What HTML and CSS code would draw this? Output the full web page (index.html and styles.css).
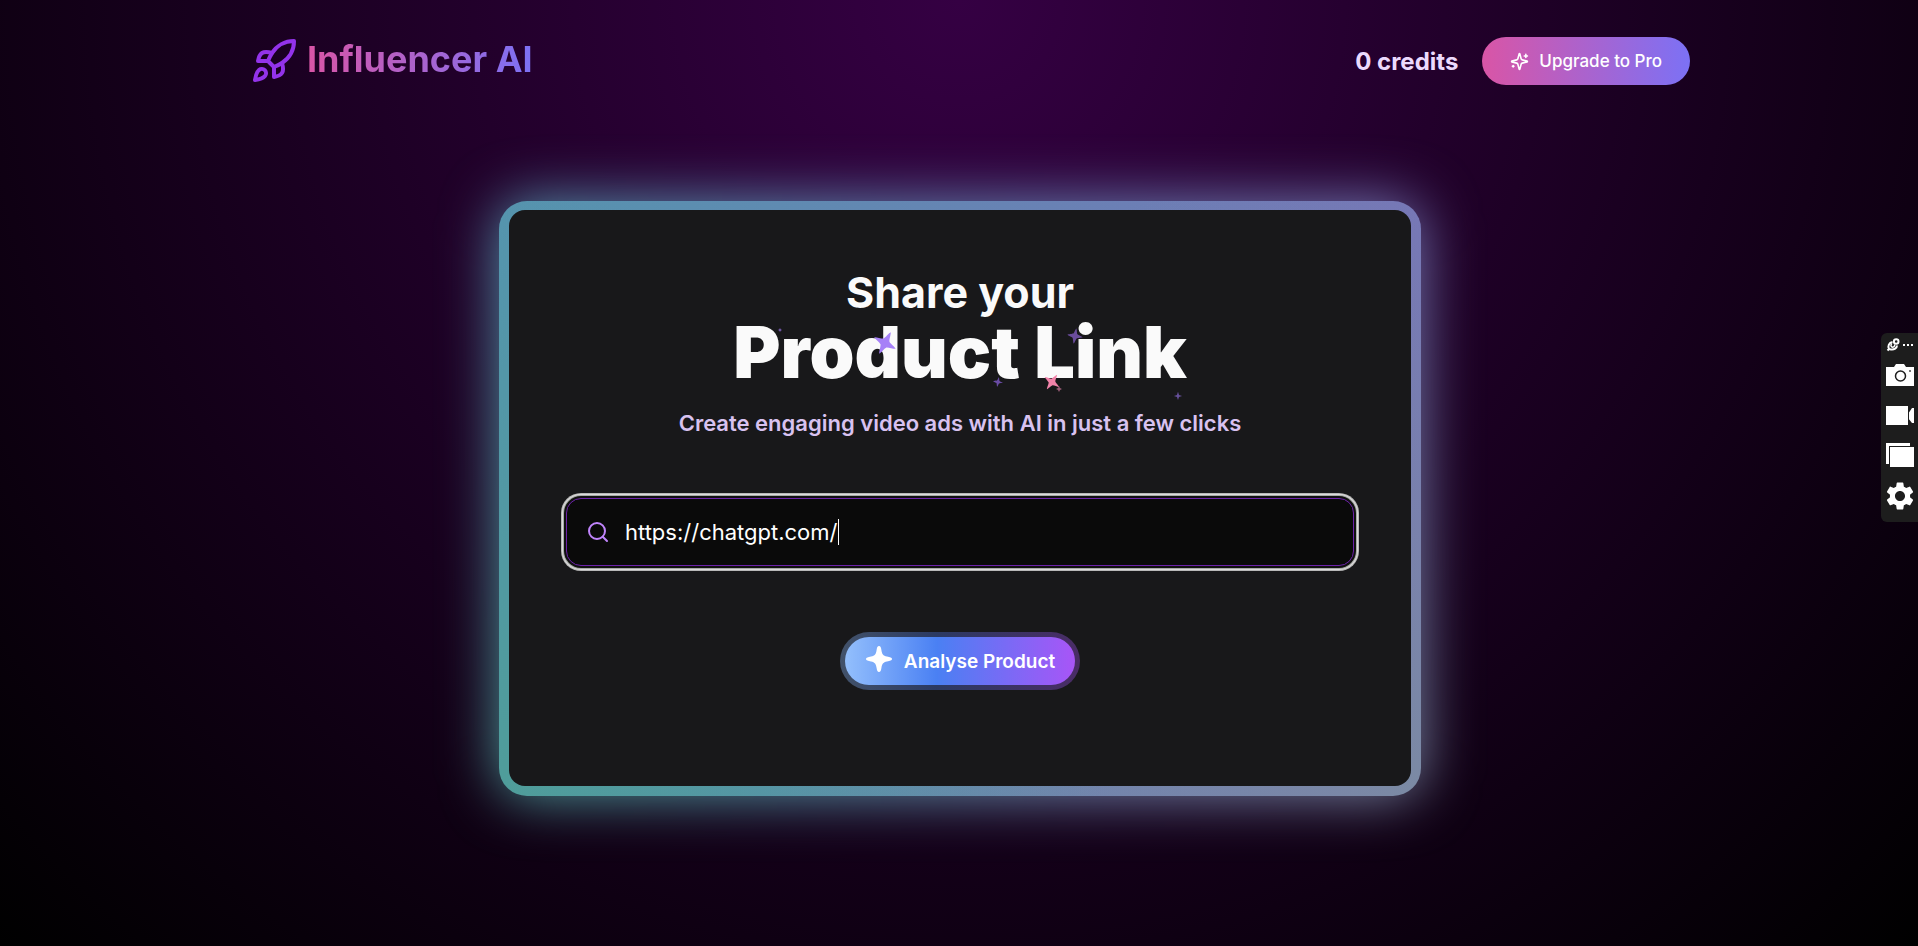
FILE: index.html
```
<!DOCTYPE html>
<html lang="en">
<head>
    <meta charset="UTF-8">
    <meta name="viewport" content="width=device-width, initial-scale=1.0">
    <title>Influencer AI</title>
    <link rel="stylesheet" href="styles.css">
</head>
<body>
<header class="header">
    <a class="logo" href="#">
        <svg class="logo-icon" viewBox="0 0 24 24">
            <path d="M4.5 16.5c-1.5 1.26-2 5-2 5s3.74-.5 5-2c.71-.84.7-2.13-.09-2.91a2.18 2.18 0 0 0-2.91-.09z"/>
            <path d="m12 15-3-3a22 22 0 0 1 2-3.95A12.88 12.88 0 0 1 22 2c0 2.72-.78 7.5-6 11a22.35 22.35 0 0 1-4 2z"/>
            <path d="M9 12H4s.55-3.03 2-4c1.62-1.08 5 0 5 0"/>
            <path d="M12 15v5s3.03-.55 4-2c1.08-1.62 0-5 0-5"/>
        </svg>
        <span class="logo-text">Influencer AI</span>
    </a>
    <div class="account">
        <span class="credits">0 credits</span>
        <button type="button" class="btn-upgrade">
            <svg class="upgrade-icon" viewBox="0 0 24 24">
                <path d="M9.937 15.5A2 2 0 0 0 8.5 14.063l-6.135-1.582a.5.5 0 0 1 0-.962L8.5 9.936A2 2 0 0 0 9.937 8.5l1.582-6.135a.5.5 0 0 1 .963 0L14.063 8.5A2 2 0 0 0 15.5 9.937l6.135 1.581a.5.5 0 0 1 0 .964L15.5 14.063a2 2 0 0 0-1.437 1.437l-1.582 6.135a.5.5 0 0 1-.963 0z"/>
                <path d="M20 3v4M22 5h-4M4 17v2M5 18H3"/>
            </svg>
            Upgrade to Pro
        </button>
    </div>
</header>

<main class="main">
    <div class="card">
        <form class="card-body">
            <h1 class="title">
                <span class="title-small">Share your</span>
                <span class="title-big">Product Link
                    <svg class="sparkles" viewBox="0 0 480 90">
                        <defs>
                            <path id="star" d="M0-10Q1.500-1.500 10 0Q1.500 1.500 0 10Q-1.500 1.500-10 0Q-1.500-1.500 0-10Z"/>
                            <path id="sparkle" d="M0-11C1-10 2-4 3-3C4-2 10-1 11 0C10 1 4 2 3 3C2 4 1 10 0 11C-1 10-2 4-3 3C-4 2-10 1-11 0C-10-1-4-2-3-3C-2-4-1-10 0-11Z"/>
                        </defs>
                        <use href="#sparkle" transform="translate(165 25) rotate(28) scale(1.100)" fill="#a681f7"/>
                        <use href="#sparkle" transform="translate(355 18) rotate(10) scale(.7)" fill="#6a4c9c"/>
                        <use href="#sparkle" transform="translate(278 64) rotate(10) scale(.45)" fill="#6a4ca5"/>
                        <use href="#sparkle" transform="translate(332 64) rotate(35) scale(.8)" fill="#f283aa"/>
                        <use href="#star" transform="translate(339 71) scale(.3)" fill="#9c5d78"/>
                        <use href="#sparkle" transform="translate(458 78) scale(.36)" fill="#66509a"/>
                        <use href="#star" transform="translate(60 12) scale(.2)" fill="#7b5fb5"/>
                    </svg>
                </span>
            </h1>
            <p class="subtitle">Create engaging video ads with AI in just a few clicks</p>
            <label class="search">
                <svg class="search-icon" viewBox="0 0 24 24">
                    <circle cx="11" cy="11" r="8"/>
                    <path d="m21 21-4.300-4.300"/>
                </svg>
                <input type="text" class="search-input" value="https://chatgpt.com/" aria-label="Product link">
                <span class="caret"></span>
            </label>
            <button type="button" class="btn-analyse">
                <svg class="analyse-icon" viewBox="0 0 28 28">
                    <path d="M14 1C15.500 1 16 2.500 16.400 5C17 9 18 10.800 22 11.600C25 12.200 27 12.600 27 14C27 15.400 25 15.800 22 16.400C18 17.200 17 19 16.400 23C16 25.500 15.500 27 14 27C12.500 27 12 25.500 11.600 23C11 19 10 17.200 6 16.400C3 15.800 1 15.400 1 14C1 12.600 3 12.200 6 11.600C10 10.800 11 9 11.600 5C12 2.500 12.500 1 14 1Z"/>
                </svg>
                Analyse Product
            </button>
        </form>
    </div>
</main>

<!-- recorder toolbar -->
<aside class="toolbar">
    <div class="toolbar-top">
        <svg width="14" height="14" viewBox="0 0 14 14" fill="none" stroke="#fff">
            <path d="M1.500 12.500L3 11C1.500 8 3 4.500 6.500 4M11 7.500C11 10 8 12 5 11.500L3 11" stroke-width="2"/>
            <path d="M6 5.500C4.500 6.500 4.500 9 6.500 9.200C8.500 9.200 9 7.500 8.500 6.500" stroke-width="1.500"/>
            <circle cx="10.200" cy="3.500" r="2.300" stroke-width="2"/>
        </svg>
        <svg width="12" height="4" viewBox="0 0 12 4" fill="#fff">
            <path d="M1 1h2v2H1zM5 1h2v2H5zM9 1h2v2H9z"/>
        </svg>
    </div>
    <button type="button" class="tool" aria-label="Screenshot">
        <svg viewBox="0 0 28 28">
            <path fill="#fff" d="M0 5H8L10 2H18L20 5H28V24H0Z"/>
            <circle cx="14.500" cy="14" r="5" fill="#fff" stroke="#1d1d1d" stroke-width="1.500"/>
            <path fill="#777" d="M23 8h2v2h-2z"/>
        </svg>
    </button>
    <button type="button" class="tool" aria-label="Record video">
        <svg viewBox="0 0 28 28">
            <path fill="#fff" d="M0 4H22V23H0ZM22 12L26 6H28V21H26L22 16Z"/>
            <path stroke="#1d1d1d" stroke-width="1" d="M22.500 4V23"/>
        </svg>
    </button>
    <button type="button" class="tool" aria-label="Gallery">
        <svg viewBox="0 0 28 28">
            <path fill="#fff" d="M0 1H24V4H3V22H0ZM4 5H28V25H4Z"/>
        </svg>
    </button>
    <button type="button" class="tool" aria-label="Settings">
        <svg viewBox="2 2 20 20">
            <path fill="#fff" d="M19.140 12.940c.04-.3.060-.61.060-.94 0-.32-.02-.64-.07-.94l2.030-1.580a.49.49 0 0 0 .12-.61l-1.920-3.320a.488.488 0 0 0-.59-.22l-2.390.96c-.5-.38-1.030-.7-1.620-.94l-.36-2.540a.484.484 0 0 0-.48-.41h-3.840c-.24 0-.43.17-.47.41l-.36 2.540c-.59.24-1.130.57-1.620.94l-2.390-.96c-.22-.08-.47 0-.59.22L2.740 8.870c-.12.21-.08.47.12.61l2.030 1.580c-.05.3-.09.63-.09.94s.02.64.07.94l-2.030 1.580a.49.49 0 0 0-.12.61l1.920 3.320c.12.22.37.29.59.22l2.390-.96c.5.38 1.030.7 1.620.94l.36 2.540c.05.24.24.41.48.41h3.840c.24 0 .44-.17.47-.41l.36-2.540c.59-.24 1.130-.56 1.620-.94l2.390.96c.22.08.47 0 .59-.22l1.920-3.320c.12-.22.07-.47-.12-.61l-2.010-1.580zM12 15.600c-1.980 0-3.600-1.620-3.600-3.600s1.620-3.600 3.600-3.600 3.600 1.620 3.600 3.600-1.620 3.600-3.600 3.600z"/>
        </svg>
    </button>
</aside>
</body>
</html>
```
FILE: styles.css
```
* {
    box-sizing: border-box;
}
body {
    margin: 0;
    min-height: 100vh;
    font-family: Inter, "Liberation Sans", sans-serif;
    color: #fafafa;
    background: radial-gradient(ellipse at top, #350043, #000) no-repeat #000;
}
button {
    font-family: inherit;
    border: none;
    cursor: pointer;
}
.header {
    display: flex;
    justify-content: space-between;
    align-items: center;
    padding: 37px 228px 0 250px;
}
.logo {
    display: flex;
    align-items: center;
    gap: 9px;
    text-decoration: none;
}
.logo-icon {
    width: 48px;
    height: 48px;
    fill: none;
    stroke: #9333ea;
    stroke-width: 2;
    stroke-linecap: round;
    stroke-linejoin: round;
}
.logo-text {
    padding-bottom: 4px;
    font-size: 36px;
    line-height: 44px;
    font-weight: 700;
    background: linear-gradient(to right, #d955a6, #7c71f5);
    -webkit-background-clip: text;
    background-clip: text;
    color: transparent;
}
.account {
    display: flex;
    align-items: center;
    gap: 24px;
}
.credits {
    font-size: 24px;
    font-weight: 700;
    color: #ecdafd;
}
.btn-upgrade {
    display: flex;
    align-items: center;
    gap: 10px;
    height: 48px;
    padding: 0 28px;
    border-radius: 24px;
    font-size: 17px;
    font-weight: 500;
    color: #fff;
    background: linear-gradient(to right, #d955a6, #7c71f5);
}
.upgrade-icon {
    width: 19px;
    height: 19px;
    fill: none;
    stroke: #fff;
    stroke-width: 2;
    stroke-linecap: round;
    stroke-linejoin: round;
}
.main {
    display: flex;
    justify-content: center;
    padding: 116px 18px 60px 20px;
}
.card {
    position: relative;
    isolation: isolate;
    width: 100%;
    max-width: 922px;
    padding: 9px 10px 10px;
}
/* gradient frame and the glow behind it */
.card::before,
.card::after {
    content: "";
    position: absolute;
    inset: 0;
    z-index: -1;
    border-radius: 28px;
    background:
        radial-gradient(circle at bottom left, #4f9d9a, transparent 55%),
        radial-gradient(circle at bottom right, #7b8aa4, transparent 60%),
        linear-gradient(to right, #5594ae, #7675b8);
}
.card::before {
    filter: blur(28px);
}
.card-body {
    display: flex;
    flex-direction: column;
    align-items: center;
    min-height: 576px;
    padding: 56px 57px;
    border-radius: 16px;
    background: #18181a;
}
.title {
    display: flex;
    flex-direction: column;
    align-items: center;
    margin: 0;
}
.title-small {
    font-size: 43px;
    line-height: 52px;
    font-weight: 700;
}
.title-big {
    position: relative;
    font-size: 72px;
    line-height: 68px;
    font-weight: 900;
}
.sparkles {
    position: absolute;
    top: 0;
    left: 50%;
    width: 480px;
    height: 90px;
    margin-left: -240px;
}
.subtitle {
    margin: 23px 0 61px;
    font-size: 22px;
    line-height: 28px;
    font-weight: 600;
    color: #d8c2f0;
}
.search {
    display: flex;
    align-items: center;
    width: 100%;
    height: 68px;
    padding: 0 19px;
    border: 1px solid #6b21a8;
    border-radius: 15px;
    background: #0a0a0a;
    box-shadow: 0 0 0 2px #101010, 0 0 0 3px #a8aaa8, 0 0 0 4px #dcdcdc, 0 0 0 5px #b8b8b8;
    cursor: text;
}
.search-icon {
    width: 24px;
    height: 24px;
    margin-right: 15px;
    fill: none;
    stroke: #c084fc;
    stroke-width: 2;
    stroke-linecap: round;
    stroke-linejoin: round;
}
.search-input {
    field-sizing: content;
    padding: 0;
    border: none;
    outline: none;
    background: none;
    font-family: inherit;
    font-size: 22px;
    color: #fff;
}
.caret {
    width: 1px;
    height: 26px;
    background: #fff;
}
.btn-analyse {
    display: flex;
    align-items: center;
    gap: 11px;
    height: 58px;
    margin-top: 66px;
    padding: 0 20px;
    border: 5px solid transparent;
    border-radius: 29px;
    font-size: 19px;
    font-weight: 600;
    color: #fff;
    background:
        linear-gradient(to right, #93bffc, #4a80f3 40%, #a855f7) padding-box,
        linear-gradient(to right, #42526a, #2b3a63 40%, #4a2c66) border-box;
}
.analyse-icon {
    width: 28px;
    height: 28px;
    margin-bottom: 4px;
    fill: #fff;
}
.toolbar {
    position: fixed;
    top: 333px;
    right: 0;
    display: flex;
    flex-direction: column;
    align-items: center;
    gap: 12px;
    width: 37px;
    padding: 5px 4px 12px 5px;
    border-radius: 6px 0 0 6px;
    background: #1d1d1d;
}
.toolbar-top {
    display: flex;
    align-items: center;
    gap: 2px;
    height: 14px;
    margin-bottom: -2px;
}
.tool {
    display: block;
    width: 28px;
    height: 28px;
    padding: 0;
    background: none;
}
.tool svg {
    display: block;
    width: 28px;
    height: 28px;
}
```
